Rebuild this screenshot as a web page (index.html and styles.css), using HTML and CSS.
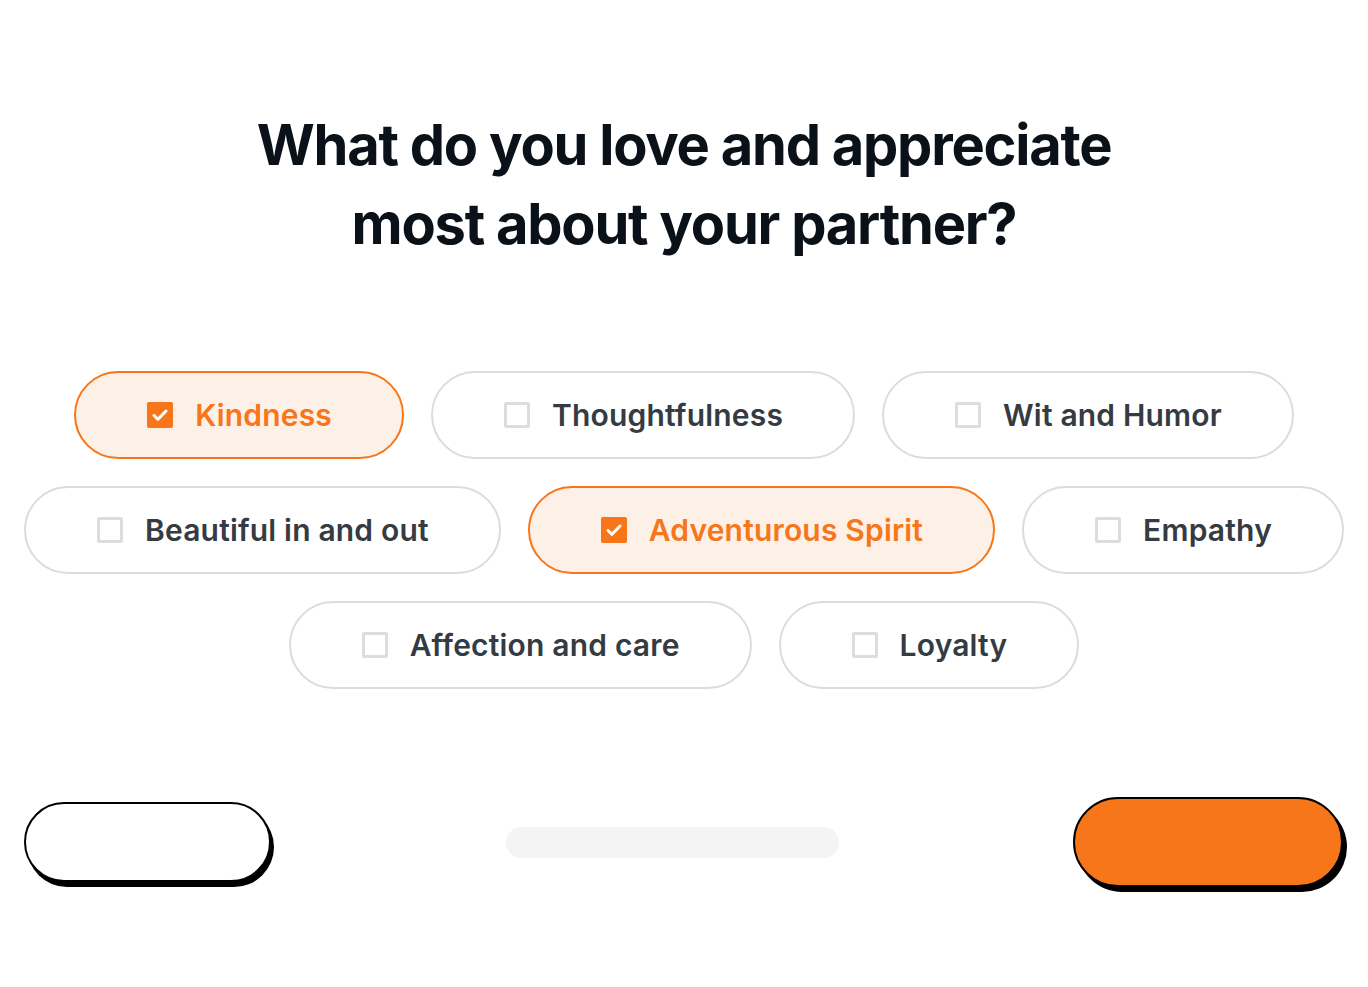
FILE: index.html
```html
<!DOCTYPE html>
<html lang="en">
<head>
    <meta charset="UTF-8">
    <meta name="viewport" content="width=device-width, initial-scale=1.0">
    <title>Question</title>
    <link rel="stylesheet" href="styles.css">
</head>
<body>
    <div class="page">
        <h1 class="question">What do you love and appreciate<br>most about your partner?</h1>

        <div class="options">
            <div class="option-row">
                <label class="option checked"><span class="box"></span>Kindness</label>
                <label class="option"><span class="box"></span>Thoughtfulness</label>
                <label class="option"><span class="box"></span>Wit and Humor</label>
            </div>
            <div class="option-row">
                <label class="option"><span class="box"></span>Beautiful in and out</label>
                <label class="option checked"><span class="box"></span>Adventurous Spirit</label>
                <label class="option"><span class="box"></span>Empathy</label>
            </div>
            <div class="option-row">
                <label class="option"><span class="box"></span>Affection and care</label>
                <label class="option"><span class="box"></span>Loyalty</label>
            </div>
        </div>

        <div class="nav">
            <button class="btn-back"></button>
            <div class="progress"></div>
            <button class="btn-next"></button>
        </div>
    </div>
</body>
</html>
```

FILE: styles.css
```css
body {
    margin: 0;
    padding: 0;
    background-color: #fff;
    font-family: Inter, "Noto Sans", sans-serif;
}

.page {
    width: 1368px;
    height: 987px;
    display: flex;
    flex-direction: column;
    align-items: center;
}

.question {
    margin: 106px 0 0;
    font-size: 56px;
    line-height: 79px;
    font-weight: 700;
    letter-spacing: -0.022em;
    color: #0a1119;
    text-align: center;
}

.options {
    margin-top: 107px;
    display: flex;
    flex-direction: column;
    gap: 27px;
    align-items: center;
}

.option-row {
    display: flex;
    gap: 27px;
    justify-content: center;
}

.option {
    height: 88px;
    box-sizing: border-box;
    padding: 0 70px 0 71px;
    border: 2px solid #dcdcdc;
    border-radius: 44px;
    display: flex;
    align-items: center;
    gap: 22px;
    font-size: 30px;
    font-weight: 600;
    letter-spacing: 0.006em;
    color: #343b42;
    white-space: nowrap;
}

.box {
    width: 26px;
    height: 26px;
    box-sizing: border-box;
    border: 3px solid #dddddd;
    border-radius: 2px;
    flex-shrink: 0;
}

.option.checked {
    border-color: #f7761a;
    background-color: #fdf0e7;
    color: #f7761a;
}

.option.checked .box {
    border: none;
    background-color: #f7761a;
    background-image: url("data:image/svg+xml,%3Csvg xmlns='http://www.w3.org/2000/svg' viewBox='0 0 26 26'%3E%3Cpath d='M7 13.5l4 3.8 8-8.3' fill='none' stroke='white' stroke-width='3' stroke-linecap='round' stroke-linejoin='round'/%3E%3C/svg%3E");
    background-size: 100% 100%;
}

.nav {
    margin-top: 108px;
    width: 100%;
    box-sizing: border-box;
    padding: 0 25px 0 24px;
    display: flex;
    justify-content: space-between;
    align-items: center;
}

.btn-back {
    width: 247px;
    height: 80px;
    border: 2px solid #000;
    border-radius: 40px;
    background-color: #fff;
    box-shadow: 3px 5px 0 #000;
    cursor: pointer;
}

.btn-next {
    width: 270px;
    height: 90px;
    border: 2px solid #000;
    border-radius: 45px;
    background-color: #f7761a;
    box-shadow: 4px 5px 0 #000;
    cursor: pointer;
}

.progress {
    width: 333px;
    height: 31px;
    border-radius: 16px;
    background-color: #f4f4f4;
}
```
